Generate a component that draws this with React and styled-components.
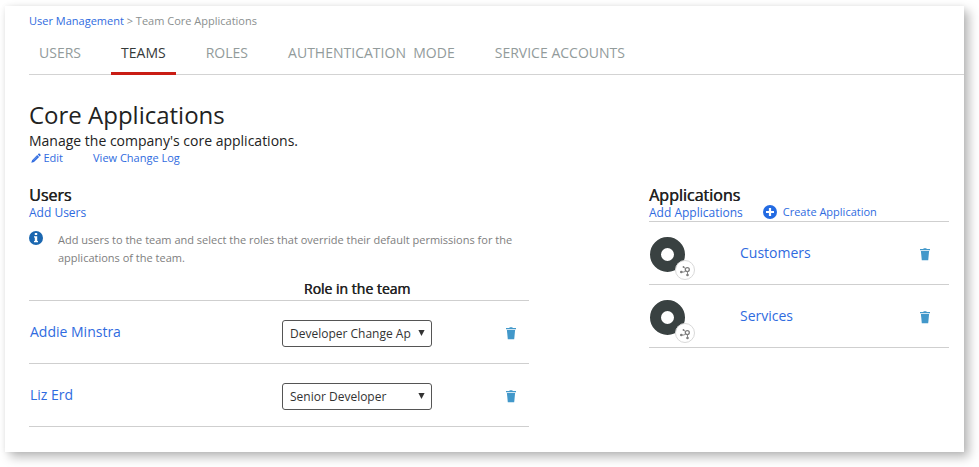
import React from "react";
import styled, { createGlobalStyle } from "styled-components";

const GlobalStyle = createGlobalStyle`
  *, *::before, *::after { box-sizing: border-box; }
  body {
    margin: 0;
    background: #fff;
    font-family: "Open Sans", "Noto Sans", sans-serif;
    color: #222;
  }
`;

const Page = styled.div`
  height: 467px;
  padding: 6px 0 0 5px;
  overflow: hidden;
`;

const Card = styled.main`
  width: 959px;
  height: 446px;
  padding: 6px 0 0 24px;
  background: #fff;
  box-shadow: 5px 5px 10px rgba(0, 0, 0, 0.28), 0 0 5px rgba(0, 0, 0, 0.06);
`;

const Link = styled.a`
  color: #2f6be0;
  text-decoration: none;
  white-space: nowrap;
  font-size: ${(p) => p.$size || 12}px;
`;

const Breadcrumb = styled.nav`
  height: 18px;
  line-height: 18px;
  font-size: 11px;
  color: #8b8f8f;
`;

const Tabs = styled.nav`
  display: flex;
  gap: 20px;
  height: 45px;
  border-bottom: 1px solid #d3d3d3;
`;

const Tab = styled.a`
  height: 45px;
  padding: 0 10px;
  line-height: 46px;
  font-size: 14px;
  letter-spacing: 0.01px;
  white-space: pre;
  color: ${(p) => (p.$active ? "#343a3a" : "#929b9b")};
  border-bottom: 3px solid ${(p) => (p.$active ? "#c91c14" : "transparent")};
`;

const Title = styled.h1`
  height: 34px;
  margin: 23px 0 0;
  line-height: 34px;
  font-size: 24px;
  font-weight: 400;
`;

const Description = styled.p`
  height: 18px;
  margin: 0;
  line-height: 18px;
  font-size: 14px;
`;

const TeamActions = styled.div`
  display: flex;
  align-items: center;
  height: 16px;
  line-height: 16px;
  padding-left: 2px;
  gap: 30px;
`;

const IconLink = styled.span`
  display: flex;
  align-items: center;
  gap: ${(p) => p.$gap}px;
`;

const Columns = styled.div`
  display: grid;
  grid-template-columns: 500px 300px;
  column-gap: 120px;
  align-items: start;
  margin-top: 19px;
`;

const SectionTitle = styled.h2`
  height: 20px;
  margin: 0;
  line-height: 20px;
  font-size: 16px;
  font-weight: 400;
  text-shadow: 0.5px 0 0 #222;
`;

const SectionActions = styled.div`
  display: flex;
  align-items: flex-start;
  gap: 20px;
  height: 16px;
  line-height: 14px;
`;

const SectionLink = styled(Link)`
  line-height: 16px;
`;

const Hint = styled.div`
  display: grid;
  grid-template-columns: 14px 470px;
  column-gap: 15px;
  height: 57px;
  padding-top: 10px;
  font-size: 11px;
  line-height: 18px;
  color: #7e7e7e;
`;

const HintText = styled.p`
  margin: 0;
`;

const RoleHeader = styled.div`
  width: 150px;
  height: 22px;
  margin-left: 253px;
  line-height: 22px;
  font-size: 14px;
  text-align: center;
  text-shadow: 0.5px 0 0 #222;
`;

const List = styled.div`
  border-top: 1px solid #cfcfcf;
`;

const UserRow = styled.div`
  display: grid;
  grid-template-columns: 252px 150px 1fr;
  align-items: center;
  height: 63px;
  padding: 3px 12px 0 1px;
  border-bottom: 1px solid #cfcfcf;
`;

const AppRow = styled.div`
  display: grid;
  grid-template-columns: 90px 1fr 12px;
  align-items: center;
  height: 63px;
  padding: 2px 18px 0 1px;
  border-bottom: 1px solid #cfcfcf;
`;

const RowLink = styled(Link)`
  padding-bottom: 4px;
`;

const Select = styled.button`
  display: flex;
  align-items: center;
  justify-content: space-between;
  width: 150px;
  height: 27px;
  padding: 0 6px 0 7px;
  border: 1px solid #555;
  border-radius: 3px;
  background: #fff;
  color: #333;
  font: 12px "Open Sans", sans-serif;
`;

const SelectText = styled.span`
  width: 122px;
  overflow: hidden;
  white-space: nowrap;
  text-align: left;
`;

const TrashCell = styled.span`
  display: flex;
  justify-self: end;
`;

const Svg = styled.svg`
  display: block;
  flex: none;
`;

const TrashIcon = () => (
  <Svg width="12" height="13" viewBox="0 0 12 13" fill="#4298ca">
    <path d="M1 1.1H4.2L4.8.3H7.2L7.8 1.1H11V2.3H1Z" />
    <path d="M1.9 3H10.1L9.2 12.3H2.8Z" />
  </Svg>
);

const InfoIcon = () => (
  <Svg width="14" height="14" viewBox="0 0 14 14">
    <circle cx="7" cy="7" r="7" fill="#1b67b0" />
    <path d="M5.8 2H8.2V4H5.8ZM5 5.3H8.2V10H9V11.2H5V10H5.8V6.5H5Z" fill="#fff" />
  </Svg>
);

const PencilIcon = () => (
  <Svg width="10" height="10" viewBox="0 0 10 10" fill="#2f6be0">
    <path d="M.3 9.8 1.1 7.2 6.2 2.1 8.1 4 3 9ZM6.8 1.5 7.7.6Q8.1.2 8.5.6L9.6 1.7Q10 2.1 9.6 2.5L8.7 3.4Z" />
    <path d="M2.3 7.3 6.3 3.4" stroke="#a9c5f5" strokeWidth="0.5" />
  </Svg>
);

const PlusIcon = () => (
  <Svg width="14" height="14" viewBox="0 0 14 14">
    <circle cx="7" cy="7" r="7" fill="#246be2" />
    <path d="M7 3V11M3 7H11" stroke="#fff" strokeWidth="2.2" />
  </Svg>
);

const ArrowIcon = () => (
  <Svg width="7" height="7" viewBox="0 0 7 7" fill="#333">
    <path d="M.4 0H6.6L3.5 6Z" />
  </Svg>
);

const ServiceIcon = () => (
  <Svg width="46" height="58" viewBox="0 0 46 58">
    <circle cx="17.5" cy="29.5" r="12" fill="none" stroke="#394141" strokeWidth="11" />
    <g transform="translate(0 11)">
      <circle cx="35" cy="34" r="9.5" fill="#fff" stroke="#d9d9d9" />
      <g fill="none" stroke="#7d7d7d" strokeWidth="0.9">
        <circle cx="37.3" cy="33.6" r="2" strokeWidth="1.3" />
        <path d="M31.5 36H34L35.7 35M33.6 31 35 32.2M37.5 35.7V38" />
      </g>
      <g fill="#7d7d7d">
        <circle cx="31.3" cy="36" r="1.3" />
        <circle cx="33.5" cy="31" r="0.9" />
        <circle cx="37.5" cy="39" r="1.3" />
      </g>
    </g>
  </Svg>
);

const tabs = ["USERS", "TEAMS", "ROLES", "AUTHENTICATION  MODE", "SERVICE ACCOUNTS"];
const users = [
  { name: "Addie Minstra", role: "Developer Change Ap" },
  { name: "Liz Erd", role: "Senior Developer" },
];
const applications = ["Customers", "Services"];

export default function App() {
  return (
    <Page>
      <GlobalStyle />
      <Card>
        <Breadcrumb>
          <Link $size={11}>User Management</Link> &gt; Team Core Applications
        </Breadcrumb>
        <Tabs>
          {tabs.map((tab) => (
            <Tab key={tab} $active={tab === "TEAMS"}>{tab}</Tab>
          ))}
        </Tabs>
        <Title>Core Applications</Title>
        <Description>Manage the company's core applications.</Description>
        <TeamActions>
          <IconLink $gap={2.5}>
            <PencilIcon />
            <Link $size={11}>Edit</Link>
          </IconLink>
          <Link $size={11}>View Change Log</Link>
        </TeamActions>
        <Columns>
          <section>
            <SectionTitle>Users</SectionTitle>
            <SectionActions>
              <SectionLink>Add Users</SectionLink>
            </SectionActions>
            <Hint>
              <InfoIcon />
              <HintText>
                Add users to the team and select the roles that override their default permissions for the
                applications of the team.
              </HintText>
            </Hint>
            <RoleHeader>Role in the team</RoleHeader>
            <List>
              {users.map((user) => (
                <UserRow key={user.name}>
                  <RowLink $size={14}>{user.name}</RowLink>
                  <Select>
                    <SelectText>{user.role}</SelectText>
                    <ArrowIcon />
                  </Select>
                  <TrashCell><TrashIcon /></TrashCell>
                </UserRow>
              ))}
            </List>
          </section>
          <section>
            <SectionTitle>Applications</SectionTitle>
            <SectionActions>
              <SectionLink>Add Applications</SectionLink>
              <IconLink $gap={6}>
                <PlusIcon />
                <Link $size={11}>Create Application</Link>
              </IconLink>
            </SectionActions>
            <List>
              {applications.map((name) => (
                <AppRow key={name}>
                  <ServiceIcon />
                  <RowLink $size={14}>{name}</RowLink>
                  <TrashCell><TrashIcon /></TrashCell>
                </AppRow>
              ))}
            </List>
          </section>
        </Columns>
      </Card>
    </Page>
  );
}
